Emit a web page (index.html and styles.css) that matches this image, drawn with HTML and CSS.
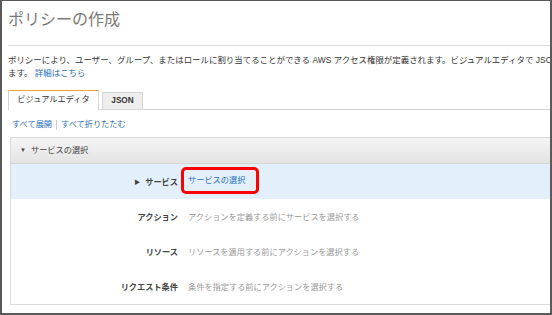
FILE: index.html
```html
<!DOCTYPE html>
<html lang="ja">
<head>
    <meta charset="UTF-8">
    <title>ポリシーの作成</title>
    <link rel="stylesheet" href="styles.css">
</head>
<body>
<div class="frame">
    <h1 class="page-title">ポリシーの作成</h1>
    <div class="intro">
        <div class="intro-line">ポリシーにより、ユーザー、グループ、またはロールに割り当てることができる AWS アクセス権限が定義されます。ビジュアルエディタで JSON を使用してポリシーを作成または編集でき</div>
        <div class="intro-line">ます。 <a href="#" class="link">詳細はこちら</a></div>
    </div>

    <div class="tabs">
        <div class="tab active">ビジュアルエディタ</div>
        <div class="tab">JSON</div>
    </div>

    <div class="toggles">
        <a href="#" class="link">すべて展開</a><span class="sep"></span><a href="#" class="link">すべて折りたたむ</a>
    </div>

    <div class="panel">
        <div class="panel-head"><span class="caret">▼</span>サービスの選択</div>
        <div class="row selected">
            <div class="label"><span class="caret-right">▶</span>サービス</div>
            <div class="value"><span class="highlight"><a href="#" class="link">サービスの選択</a></span></div>
        </div>
        <div class="row">
            <div class="label">アクション</div>
            <div class="value muted">アクションを定義する前にサービスを選択する</div>
        </div>
        <div class="row">
            <div class="label">リソース</div>
            <div class="value muted">リソースを適用する前にアクションを選択する</div>
        </div>
        <div class="row">
            <div class="label">リクエスト条件</div>
            <div class="value muted">条件を指定する前にアクションを選択する</div>
        </div>
    </div>
</div>
</body>
</html>
```

FILE: styles.css
```css
body {
    margin: 0;
    font-family: "Liberation Sans", "Noto Sans CJK JP", sans-serif;
    background: white;
}

.frame {
    width: 552px;
    height: 315px;
    box-sizing: border-box;
    border: 2px solid #5a5a5a;
    border-top-width: 1px;
    padding-left: 6px;
    overflow: hidden;
    background: white;
}

.page-title {
    margin: 0;
    padding: 8px 0 0;
    height: 45px;
    box-sizing: border-box;
    font-size: 16px;
    font-weight: normal;
    color: #7a7a7a;
    line-height: 22px;
    border-bottom: 1px solid #dcdcdc;
}

.intro {
    margin-top: 8px;
    font-size: 8.45px;
    line-height: 13px;
    color: #333;
}

.intro-line {
    white-space: nowrap;
    overflow: hidden;
}

.link {
    color: #2a6ebb;
    text-decoration: none;
}

.tabs {
    display: flex;
    align-items: flex-end;
    margin-top: 11px;
    border-bottom: 1px solid #d5d5d5;
    height: 18px;
}

.tab {
    width: 39px;
    height: 16px;
    line-height: 16px;
    text-align: center;
    font-size: 8.2px;
    font-weight: bold;
    color: #333;
    background: #eee;
    border: 1px solid #d5d5d5;
    border-bottom: none;
    margin-left: 3px;
}

.tab.active {
    width: 89px;
    height: 18px;
    line-height: 18px;
    margin-left: 0;
    margin-bottom: -1px;
    padding-bottom: 1px;
    background: white;
    border-top-color: #f0a040;
    font-weight: normal;
}

.toggles {
    margin-top: 8px;
    padding-left: 4px;
    font-size: 8.2px;
    line-height: 14px;
    height: 14px;
    display: flex;
    align-items: center;
}

.sep {
    display: inline-block;
    width: 1px;
    height: 10px;
    background: #ccc;
    margin: 0 4px;
}

.panel {
    margin: 5px 0 0 2px;
    border: 1px solid #dcdcdc;
    border-right: none;
}

.panel-head {
    height: 25px;
    line-height: 24px;
    font-size: 8.2px;
    color: #444;
    background: linear-gradient(#f4f4f4, #e4e4e4);
    border-bottom: 1px solid #d5d5d5;
    padding-left: 9px;
}

.caret {
    font-size: 6px;
    margin-right: 5px;
    vertical-align: 1px;
}

.row {
    display: grid;
    grid-template-columns: 167px 1fr;
    column-gap: 10px;
    height: 35px;
    padding-bottom: 2px;
    box-sizing: border-box;
    align-items: center;
    font-size: 8.2px;
}

.row.selected {
    background: #e3f0fc;
}

.label {
    text-align: right;
    font-weight: bold;
    color: #444;
}

.caret-right {
    font-size: 6px;
    margin-right: 5px;
    vertical-align: 1px;
}

.value.muted {
    color: #999;
}

.highlight {
    display: inline-block;
    margin-left: -7px;
    padding: 4px 11px 4px 4px;
    border: 3px solid #f00;
    border-radius: 5px;
    line-height: 13px;
}
```
